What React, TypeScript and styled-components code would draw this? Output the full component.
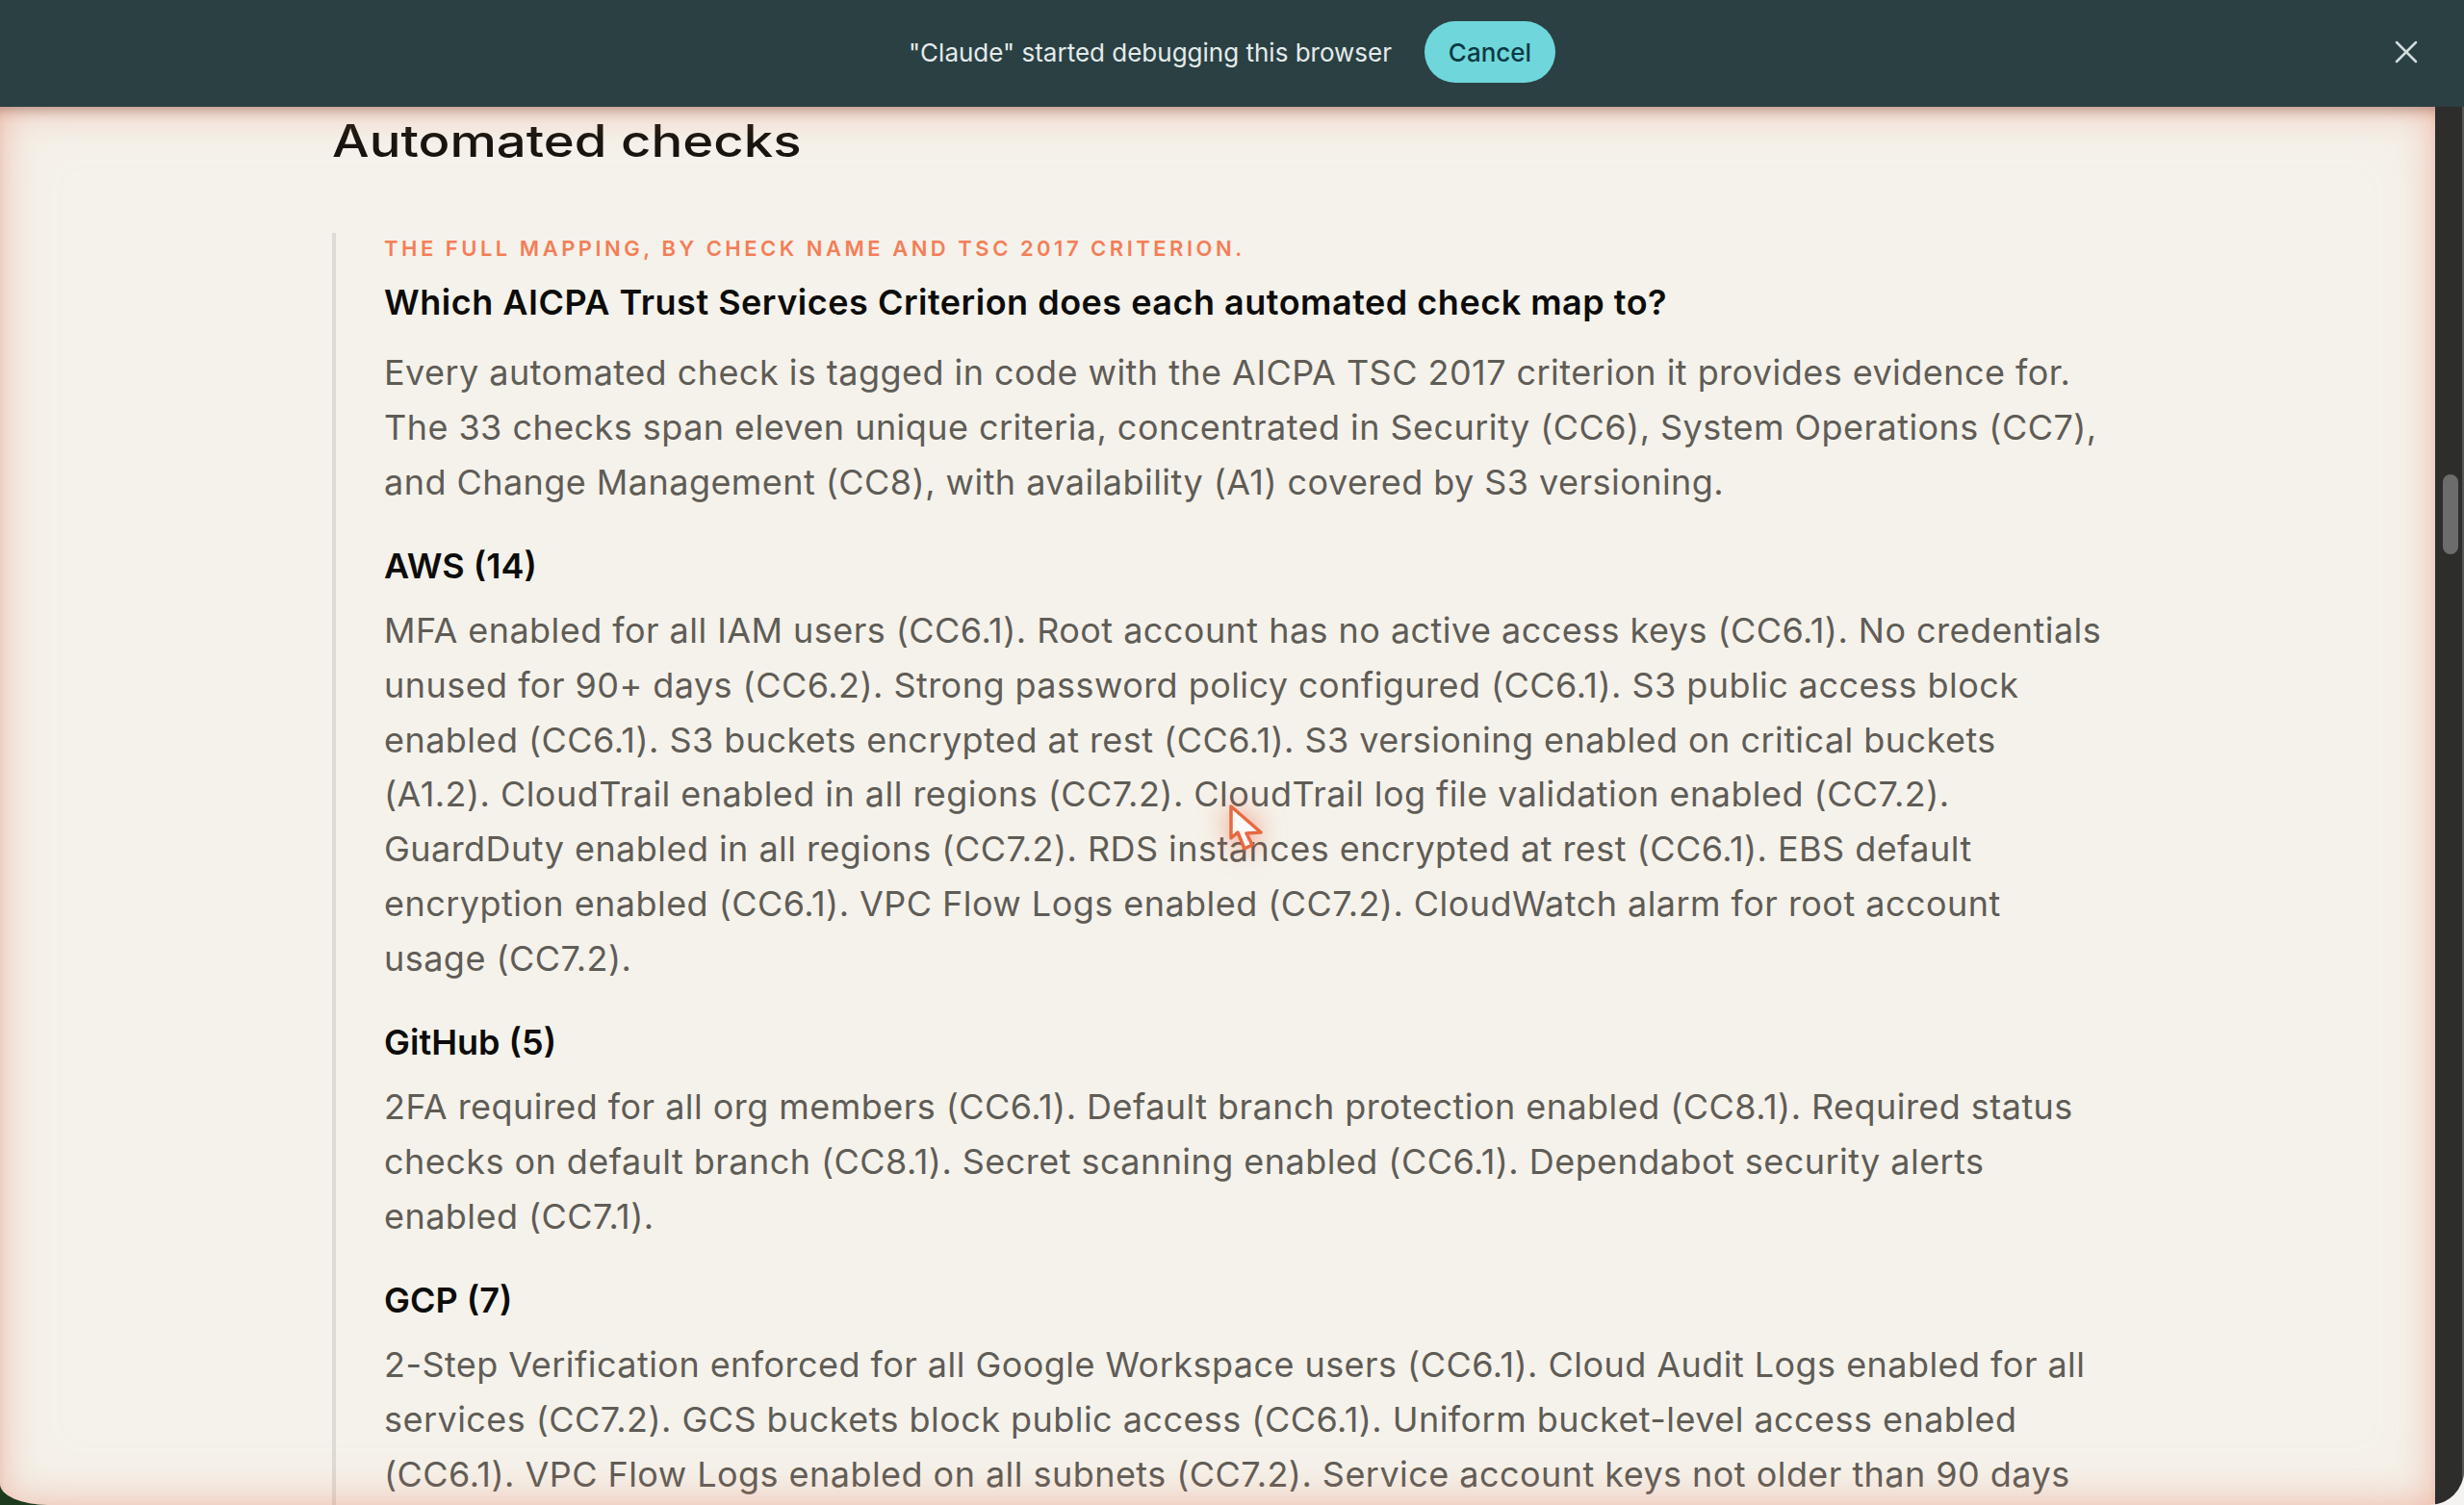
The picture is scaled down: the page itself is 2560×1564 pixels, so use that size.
import React from 'react'
import styled, { createGlobalStyle } from 'styled-components'
import { X } from 'lucide-react'

const GlobalStyle = createGlobalStyle`
  html, body {
    margin: 0;
    padding: 0;
    height: 100%;
    background: #f4f3f1;
  }
  #root {
    height: 100%;
  }
`

const Screen = styled.div`
  display: flex;
  flex-direction: column;
  height: 1564px;
  overflow: hidden;
  font-family: Inter, "Liberation Sans", sans-serif;
  background: linear-gradient(90deg, #1d3a1f 50%, #f4f3f1 50%);
`

const Banner = styled.header`
  position: relative;
  z-index: 3;
  flex: 0 0 111px;
  box-sizing: border-box;
  padding-bottom: 3px;
  display: grid;
  grid-template-columns: 1fr auto 1fr;
  align-items: center;
  background: #2a4043;
`

const BannerMiddle = styled.div`
  grid-column: 2;
  display: flex;
  align-items: center;
  gap: 34px;
`

const BannerText = styled.span`
  font-size: 26px;
  color: #e4ebeb;
`

const CancelButton = styled.button`
  width: 136px;
  height: 64px;
  padding: 0;
  border: 0;
  border-radius: 32px;
  background: #6fd7db;
  color: #0b3a44;
  font-family: inherit;
  font-size: 26px;
  font-weight: 500;
`

const CloseButton = styled.button`
  grid-column: 3;
  justify-self: end;
  display: flex;
  margin-right: 40px;
  padding: 0;
  border: 0;
  background: none;
  color: #d4dddd;
`

const Viewport = styled.div`
  flex: 1;
  display: flex;
  min-height: 0;
  border-radius: 0 0 36px 50px / 0 0 36px 22px;
  overflow: hidden;
`

const Main = styled.main`
  position: relative;
  flex: 1;
  overflow: hidden;
  padding: 5px 0 0 345px;
  background: #f5f2eb;
`

const Glow = styled.div`
  position: absolute;
  inset: 0;
  z-index: 2;
  pointer-events: none;
  box-shadow:
    inset 0 12px 14px -10px rgba(90, 50, 40, 0.45),
    inset 0 0 36px rgba(230, 120, 90, 0.44),
    inset 0 0 70px rgba(240, 170, 140, 0.14);
`

const Gutter = styled.aside`
  flex: 0 0 30px;
  box-sizing: border-box;
  padding: 382px 0 0 8px;
  background: #2d2d2b;
  border-right: 2px solid #555;
`

const Thumb = styled.div`
  width: 16px;
  height: 83px;
  border-radius: 8px;
  background: #6c6c6c;
`

const Title = styled.h2`
  margin: 0 0 66px;
  font-size: 46px;
  font-weight: 500;
  line-height: 60px;
  color: #17130f;
  transform: scaleX(1.185);
  transform-origin: left center;
`

const Aside = styled.section`
  border-left: 4px solid #dedad5;
  padding: 0 0 240px 50px;
`

const Eyebrow = styled.p`
  margin: 0;
  font-size: 22px;
  font-weight: 600;
  line-height: 32px;
  letter-spacing: 3.5px;
  color: #f47e57;
`

const Question = styled.h3`
  margin: 16px 0 0;
  font-size: 36px;
  font-weight: 600;
  line-height: 48px;
  letter-spacing: 0.5px;
  color: #0c0c0a;
`

const SubHead = styled.h4`
  margin: 34px 0 0;
  font-size: 36px;
  font-weight: 600;
  line-height: 48px;
  color: #0c0c0a;
`

const Body = styled.p<{ $gap: number }>`
  margin: ${p => p.$gap}px 0 0;
  font-size: 36px;
  line-height: 56.9px;
  letter-spacing: 0.45px;
  color: #5f5c56;
  white-space: nowrap;
`

const Line = styled.span`
  display: block;
`

const Pointer = styled.svg`
  position: absolute;
  z-index: 2;
  left: 1278px;
  top: 726px;
  overflow: visible;
  filter: drop-shadow(0 0 14px rgba(236, 100, 60, 0.7));
`

const intro = [
  'Every automated check is tagged in code with the AICPA TSC 2017 criterion it provides evidence for.',
  'The 33 checks span eleven unique criteria, concentrated in Security (CC6), System Operations (CC7),',
  'and Change Management (CC8), with availability (A1) covered by S3 versioning.',
]

const sections = [
  {
    name: 'AWS (14)',
    lines: [
      'MFA enabled for all IAM users (CC6.1). Root account has no active access keys (CC6.1). No credentials',
      'unused for 90+ days (CC6.2). Strong password policy configured (CC6.1). S3 public access block',
      'enabled (CC6.1). S3 buckets encrypted at rest (CC6.1). S3 versioning enabled on critical buckets',
      '(A1.2). CloudTrail enabled in all regions (CC7.2). CloudTrail log file validation enabled (CC7.2).',
      'GuardDuty enabled in all regions (CC7.2). RDS instances encrypted at rest (CC6.1). EBS default',
      'encryption enabled (CC6.1). VPC Flow Logs enabled (CC7.2). CloudWatch alarm for root account',
      'usage (CC7.2).',
    ],
  },
  {
    name: 'GitHub (5)',
    lines: [
      '2FA required for all org members (CC6.1). Default branch protection enabled (CC8.1). Required status',
      'checks on default branch (CC8.1). Secret scanning enabled (CC6.1). Dependabot security alerts',
      'enabled (CC7.1).',
    ],
  },
  {
    name: 'GCP (7)',
    lines: [
      '2-Step Verification enforced for all Google Workspace users (CC6.1). Cloud Audit Logs enabled for all',
      'services (CC7.2). GCS buckets block public access (CC6.1). Uniform bucket-level access enabled',
      '(CC6.1). VPC Flow Logs enabled on all subnets (CC7.2). Service account keys not older than 90 days',
    ],
  },
]

export default function App(): React.ReactElement {
  return (
    <Screen>
      <GlobalStyle />
      <Banner>
        <BannerMiddle>
          <BannerText>"Claude" started debugging this browser</BannerText>
          <CancelButton>Cancel</CancelButton>
        </BannerMiddle>
        <CloseButton aria-label="Close">
          <X size={40} strokeWidth={1.5} />
        </CloseButton>
      </Banner>
      <Viewport>
        <Main>
          <Glow />
          <Title>Automated checks</Title>
          <Aside>
            <Eyebrow>THE FULL MAPPING, BY CHECK NAME AND TSC 2017 CRITERION.</Eyebrow>
            <Question>Which AICPA Trust Services Criterion does each automated check map to?</Question>
            <Body $gap={21}>
              {intro.map(l => <Line key={l}>{l}</Line>)}
            </Body>
            {sections.map(s => (
              <React.Fragment key={s.name}>
                <SubHead>{s.name}</SubHead>
                <Body $gap={15}>
                  {s.lines.map(l => <Line key={l}>{l}</Line>)}
                </Body>
              </React.Fragment>
            ))}
          </Aside>
          <Pointer width="34" height="46" viewBox="0 0 34 46">
            <path d="M1 1 L1 34 L8 28 L15 45 L23 41 L17 29 L32 28 Z" fill="#fdfaf7" stroke="#e8693f" strokeWidth="3.5" strokeLinejoin="round" />
          </Pointer>
        </Main>
        <Gutter>
          <Thumb />
        </Gutter>
      </Viewport>
    </Screen>
  )
}
